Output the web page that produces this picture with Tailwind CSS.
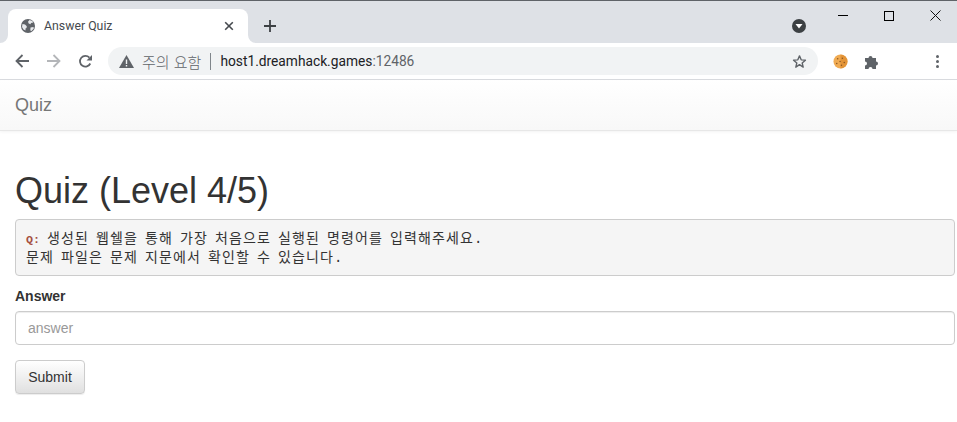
<!DOCTYPE html>
<html lang="ko">
<head>
<meta charset="UTF-8">
<title>Answer Quiz</title>
<script src="https://cdn.jsdelivr.net/npm/@tailwindcss/browser@4"></script>
</head>
<body class="h-[422px] w-[957px] overflow-hidden bg-white font-['Liberation_Sans','Noto_Sans_CJK_KR',sans-serif] text-[14px] text-[#333]">

<!-- window frame + tabs -->
<div class="h-[43px] border-t border-[#5f6368] bg-[#dee1e6] flex items-start">
  <div class="relative ml-2 mt-2 flex h-[34px] w-[240px] items-center rounded-t-lg bg-white pl-[13px] pr-[14px]">
    <svg class="absolute bottom-0 -left-2 size-2" viewBox="0 0 8 8"><path d="M8 0v8H0a8 8 0 0 0 8-8z" fill="#fff"/></svg>
    <svg class="absolute bottom-0 -right-2 size-2" viewBox="0 0 8 8"><path d="M0 0v8h8a8 8 0 0 1-8-8z" fill="#fff"/></svg>
    <svg class="size-[14px] shrink-0" viewBox="0 0 14 14"><circle cx="7" cy="7" r="7" fill="#5f6368"/><path d="M1.500 5l2.500.5 1.800 1.800-.3 1.700-1 .5v2L2.500 10.500 1 8zM8.500 1l2.800 1 1 1.500-2.300.5-.5 1.300-1.800-.8-.7-1.800zM9.500 8.500l3-.5.300 1.500-2.300 2.500-1.200-.5z" fill="#e8eaed"/></svg>
    <span class="ml-[9px] font-['Roboto',sans-serif] text-[12.3px] text-[#45494e]">Answer Quiz</span>
    <svg class="ml-auto size-[10px]" viewBox="0 0 10 10"><path d="M1.200 1.200l7.600 7.600M8.800 1.200L1.200 8.800" stroke="#45494e" stroke-width="1.600"/></svg>
  </div>
  <svg class="ml-4 mt-[19px] size-3" viewBox="0 0 12 12"><path d="M6 0v12M0 6h12" stroke="#3c4043" stroke-width="1.800"/></svg>
  <svg class="ml-[516px] mt-[18px] size-[14px]" viewBox="0 0 14 14"><circle cx="7" cy="7" r="7" fill="#3c4043"/><path d="M3.500 5h7L7 9.500z" fill="#fff"/></svg>
  <div class="ml-[32px] mt-[14px] h-px w-[10px] bg-black"></div>
  <div class="ml-[36px] mt-[10px] size-[10px] border border-black"></div>
  <svg class="ml-[36px] mt-[9px] size-[11px]" viewBox="0 0 11 11"><path d="M.5.500l10 10M10.500.500l-10 10" stroke="#111" stroke-width="1"/></svg>
</div>

<!-- toolbar -->
<div class="flex h-[37px] items-center border-b border-[#dadce0] bg-white">
  <svg class="ml-[15px] size-[14px]" viewBox="0 0 14 14"><path d="M14 7H1.500M7.500 1L1.500 7l6 6" fill="none" stroke="#5f6368" stroke-width="1.800"/></svg>
  <svg class="ml-[18px] size-[14px]" viewBox="0 0 14 14"><path d="M0 7h12.500M6.500 1l6 6-6 6" fill="none" stroke="#b4b6b9" stroke-width="1.800"/></svg>
  <svg class="ml-[17px] size-[15px]" viewBox="0 0 15 15"><path d="M12.300 9.500A5.400 5.400 0 1 1 11.400 3.600" fill="none" stroke="#5f6368" stroke-width="1.800"/><path d="M14 1v5.500H8.500z" fill="#5f6368"/></svg>
  <div class="ml-[15px] flex h-7 w-[710px] items-center rounded-full bg-[#f1f3f4] pl-[11px] pr-[11px]">
    <svg class="size-[15px] shrink-0" viewBox="0 0 15 15"><path d="M7.500 1L15 14H0z" fill="#5f6368"/><path d="M6.800 5.500h1.400v4.500H6.800zM6.800 11h1.400v1.400H6.800z" fill="#f1f3f4"/></svg>
    <span class="ml-[8px] font-['Noto_Sans_CJK_KR',sans-serif] text-[15px] leading-none font-light text-[#5f6368]">주의 요함</span>
    <div class="ml-[9px] h-[17px] w-px bg-[#80868b]"></div>
    <span class="ml-[9px] font-['Roboto',sans-serif] text-[13.75px] text-[#202124]">host1.dreamhack.games<span class="text-[#5f6368]">:12486</span></span>
    <svg class="ml-auto size-[15px]" viewBox="0 0 24 24"><path d="M12 3l2.700 6.300 6.800.6-5.200 4.500 1.600 6.700L12 17l-5.900 4.100 1.600-6.700-5.200-4.500 6.800-.6z" fill="none" stroke="#5f6368" stroke-width="2.200" stroke-linejoin="round"/></svg>
  </div>
  <svg class="ml-[15px] size-[15px]" viewBox="0 0 16 16"><circle cx="8" cy="8" r="7.500" fill="#f0ab52"/><path d="M8 .5a7.500 7.500 0 0 1 0 15" fill="#dd8a2c" opacity=".7"/><g fill="#8a5522"><circle cx="5" cy="5" r=".8"/><circle cx="10" cy="4.500" r=".8"/><circle cx="7.500" cy="8" r=".8"/><circle cx="12" cy="9" r=".8"/><circle cx="4" cy="10" r=".8"/><circle cx="9" cy="12" r=".8"/></g></svg>
  <svg class="ml-[17px] size-[15px]" viewBox="0 0 15 15"><path d="M0 4h3.500a2 2 0 0 1 4 0H11v3.500a2 2 0 0 1 0 4V15H7.500a2 2 0 0 0-4 0H0v-3.500a2 2 0 0 0 0-4z" fill="#5f6368"/></svg>
  <svg class="ml-[56px] h-[13px] w-[3px]" viewBox="0 0 3 13"><circle cx="1.500" cy="1.500" r="1.500" fill="#5f6368"/><circle cx="1.500" cy="6.500" r="1.500" fill="#5f6368"/><circle cx="1.500" cy="11.500" r="1.500" fill="#5f6368"/></svg>
</div>

<!-- navbar -->
<nav class="flex h-[51px] items-center border-b border-[#e7e7e7] bg-linear-to-b from-white to-[#f8f8f8] pl-[15px] shadow-[0_1px_3px_rgba(0,0,0,0.05)]">
  <a class="text-[18px] text-[#777]">Quiz</a>
</nav>

<!-- page -->
<main class="pl-[15px] pr-[2px] pt-[40px]">
  <h1 class="text-[36px] leading-[40px]">Quiz (Level 4/5)</h1>
  <pre class="mt-[8px] h-[57px] rounded border border-[#ccc] bg-[#f5f5f5] px-[10px] pt-[10px] font-['Liberation_Mono','Noto_Sans_CJK_KR',monospace] text-[14px] leading-[18px] tracking-[1.120px] [word-spacing:-2.520px] text-[#333]"><span class="block"><code class="font-bold tracking-normal text-[#a5503f] text-[11.700px]">Q:</code> 생성된 웹쉘을 통해 가장 처음으로 실행된 명령어를 입력해주세요.</span><span class="block">문제 파일은 문제 지문에서 확인할 수 있습니다.</span></pre>
  <label class="mt-[10px] block text-[14px] leading-[20px] font-bold">Answer</label>
  <input class="mt-[5px] block h-[34px] w-full rounded border border-[#ccc] bg-white px-3 text-[14px] text-[#555] shadow-[inset_0_1px_1px_rgba(0,0,0,0.075)] placeholder:text-[#999]" placeholder="answer">
  <button class="mt-[15px] block h-[34px] w-[70px] rounded border border-[#ccc] bg-linear-to-b from-white to-[#e0e0e0] text-[14px] text-[#333] shadow-[0_1px_1px_rgba(0,0,0,0.075)]">Submit</button>
</main>
</body>
</html>
